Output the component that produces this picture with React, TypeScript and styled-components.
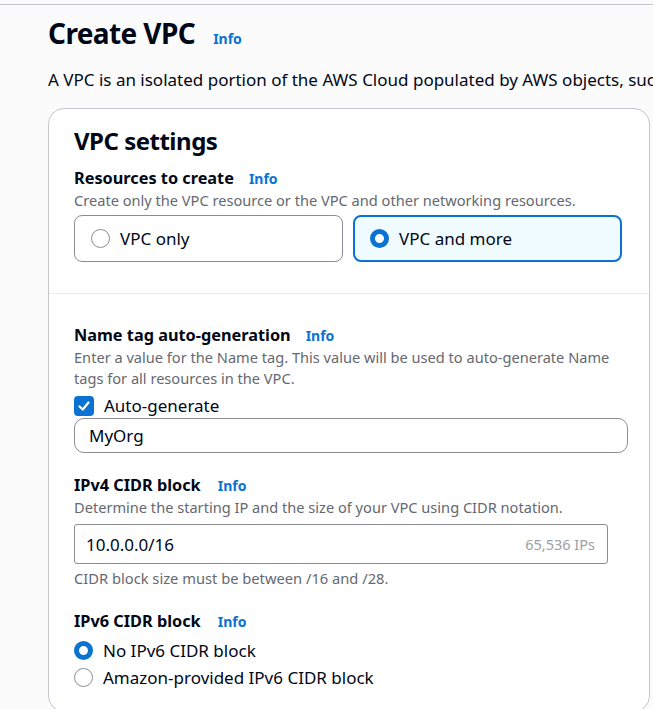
import React from "react";
import styled, { createGlobalStyle } from "styled-components";

const Global = createGlobalStyle`
  html, body { margin: 0; padding: 0; background: #fbfbfb; }
  body { font-family: "Noto Sans", "Open Sans", sans-serif; color: #000716; overflow: hidden; }
  * { box-sizing: border-box; }
`;

const Page = styled.div`
  width: 653px;
  height: 709px;
  overflow: hidden;
`;

const TopEdge = styled.div`
  height: 5px;
  border-bottom: 1px solid #c6c6cd;
`;

const Main = styled.div`
  padding: 0 0 0 48px;
  width: 653px;
`;

const TitleRow = styled.div`
  display: flex;
  align-items: baseline;
  gap: 18px;
  margin-top: 10px;
`;

const H1 = styled.h1`
  margin: 0;
  font-size: 28px;
  line-height: 36px;
  font-weight: 700;
  letter-spacing: -0.6px;
`;

const InfoLink = styled.a`
  color: #0972d3;
  font-weight: 700;
  font-size: 14px;
  text-decoration: none;
`;

const Lead = styled.p`
  margin: 18px 0 0;
  font-size: 17px;
  line-height: 22px;
  white-space: nowrap;
`;

const Card = styled.section`
  margin-top: 17px;
  background: #ffffff;
  border: 1px solid #c6c6cd;
  border-radius: 16px;
  width: 602px;
`;

const CardHeader = styled.div`
  padding: 17px 26px 31px 25px;
  border-bottom: 1px solid #e9ebed;
`;

const H2 = styled.h2`
  margin: 0;
  font-size: 24px;
  line-height: 30px;
  font-weight: 700;
  letter-spacing: -0.5px;
`;

const CardBody = styled.div`
  padding: 30px 20px 20px 25px;
  display: flex;
  flex-direction: column;
  gap: 21px;
`;

const Field = styled.div<{ $offset?: number }>`
  display: flex;
  flex-direction: column;
  margin-top: ${(p) => p.$offset ?? 0}px;
`;

const LabelRow = styled.div<{ $gap?: number }>`
  display: flex;
  align-items: baseline;
  gap: ${(p) => p.$gap ?? 15}px;
  line-height: 23px;
`;

const Label = styled.span`
  font-size: 16.3px;
  font-weight: 700;
`;

const Desc = styled.div`
  font-size: 14.6px;
  line-height: 21px;
  color: #656871;
`;

const Tiles = styled.div`
  display: grid;
  grid-template-columns: 269px 269px;
  gap: 10px;
  margin-top: 4px;
`;

const Tile = styled.div<{ $selected?: boolean }>`
  height: 47px;
  display: flex;
  align-items: center;
  gap: 10px;
  border-radius: 8px;
  border: ${(p) => (p.$selected ? "2px solid #0972d3" : "1px solid #8c8c94")};
  background: ${(p) => (p.$selected ? "#f0fbff" : "#ffffff")};
  padding-left: ${(p) => (p.$selected ? "15px" : "16px")};
  font-size: 17px;
`;

const Radio = styled.span<{ $checked?: boolean }>`
  width: 19px;
  height: 19px;
  flex: none;
  border-radius: 50%;
  border: ${(p) => (p.$checked ? "5.5px solid #0972d3" : "1.5px solid #8c8c94")};
  background: #ffffff;
`;

const Check = styled.span`
  width: 20px;
  height: 20px;
  border-radius: 4px;
  background: #0972d3;
  display: flex;
  align-items: center;
  justify-content: center;
  flex: none;
`;

const OptionRow = styled.div<{ $top?: number; $lh?: number }>`
  display: flex;
  align-items: center;
  gap: 10px;
  font-size: 17px;
  line-height: ${(p) => p.$lh ?? 27}px;
  margin-top: ${(p) => p.$top ?? 0}px;
`;

const Input = styled.div<{ $round?: boolean; $width: number }>`
  height: ${(p) => (p.$round ? 35 : 40)}px;
  width: ${(p) => p.$width}px;
  border: 1px solid #8c8c94;
  border-radius: ${(p) => (p.$round ? "10px" : "3px")};
  display: flex;
  align-items: center;
  justify-content: space-between;
  padding: ${(p) => (p.$round ? "0 12px 0 14px" : "0 12px 0 11px")};
  font-size: 17px;
  background: #ffffff;
  margin-top: ${(p) => (p.$round ? "0" : "6px")};
`;

const Suffix = styled.span`
  color: #9ba0a6;
  font-size: 14.5px;
`;

const Constraint = styled.div`
  margin-top: 4px;
  font-size: 14.7px;
  line-height: 21px;
  color: #656871;
`;

const Info = () => <InfoLink href="#">Info</InfoLink>;

export default function App() {
  return (
    <Page>
      <Global />
      <TopEdge />
      <Main>
        <TitleRow>
          <H1>Create VPC</H1>
          <Info />
        </TitleRow>
        <Lead>A VPC is an isolated portion of the AWS Cloud populated by AWS objects, such as Amazon EC2 instances.</Lead>
        <Card>
          <CardHeader>
            <H2>VPC settings</H2>
            <Field $offset={11}>
              <LabelRow>
                <Label>Resources to create</Label>
                <Info />
              </LabelRow>
              <Desc>Create only the VPC resource or the VPC and other networking resources.</Desc>
              <Tiles>
                <Tile>
                  <Radio />
                  VPC only
                </Tile>
                <Tile $selected>
                  <Radio $checked />
                  VPC and more
                </Tile>
              </Tiles>
            </Field>
          </CardHeader>
          <CardBody>
            <Field>
              <LabelRow>
                <Label>Name tag auto-generation</Label>
                <Info />
              </LabelRow>
              <Desc>Enter a value for the Name tag. This value will be used to auto-generate Name tags for all resources in the VPC.</Desc>
              <OptionRow $top={4} $lh={25}>
                <Check>
                  <svg width="14" height="14" viewBox="0 0 14 14">
                    <path d="M2.5 7.5 L5.8 10.5 L11.5 3.5" fill="none" stroke="#fff" strokeWidth="2.2" strokeLinecap="round" strokeLinejoin="round" />
                  </svg>
                </Check>
                Auto-generate
              </OptionRow>
              <Input $round $width={554}>MyOrg</Input>
            </Field>
            <Field>
              <LabelRow $gap={17}>
                <Label>IPv4 CIDR block</Label>
                <Info />
              </LabelRow>
              <Desc>Determine the starting IP and the size of your VPC using CIDR notation.</Desc>
              <Input $width={534}>
                10.0.0.0/16
                <Suffix>65,536 IPs</Suffix>
              </Input>
              <Constraint>CIDR block size must be between /16 and /28.</Constraint>
            </Field>
            <Field>
              <LabelRow $gap={17}>
                <Label>IPv6 CIDR block</Label>
                <Info />
              </LabelRow>
              <OptionRow $top={4}>
                <Radio $checked />
                No IPv6 CIDR block
              </OptionRow>
              <OptionRow>
                <Radio />
                Amazon-provided IPv6 CIDR block
              </OptionRow>
            </Field>
          </CardBody>
        </Card>
      </Main>
    </Page>
  );
}
